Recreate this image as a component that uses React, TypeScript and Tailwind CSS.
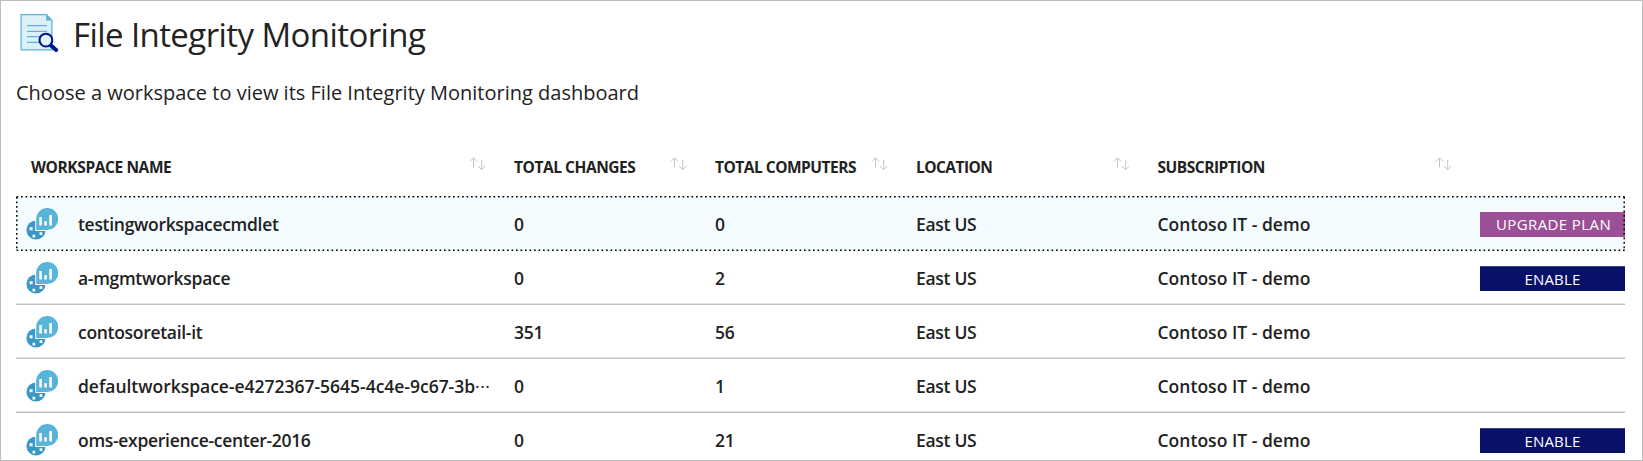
type Action = 'UPGRADE PLAN' | 'ENABLE';

interface Workspace {
  name: string;
  truncated?: boolean;
  changes: string;
  computers: string;
  location: string;
  subscription: string;
  action?: Action;
}

const workspaces: Workspace[] = [
  { name: 'testingworkspacecmdlet', changes: '0', computers: '0', location: 'East US', subscription: 'Contoso IT - demo', action: 'UPGRADE PLAN' },
  { name: 'a-mgmtworkspace', changes: '0', computers: '2', location: 'East US', subscription: 'Contoso IT - demo', action: 'ENABLE' },
  { name: 'contosoretail-it', changes: '351', computers: '56', location: 'East US', subscription: 'Contoso IT - demo' },
  { name: 'defaultworkspace-e4272367-5645-4c4e-9c67-3b', truncated: true, changes: '0', computers: '1', location: 'East US', subscription: 'Contoso IT - demo' },
  { name: 'oms-experience-center-2016', changes: '0', computers: '21', location: 'East US', subscription: 'Contoso IT - demo', action: 'ENABLE' },
];

const columns = 'grid grid-cols-[498px_201px_201px_241px_323px_145px]';

function MonitoringIcon() {
  return (
    <svg className="mt-px h-10 w-10 shrink-0" viewBox="0 0 40 40" fill="none">
      <path d="M2.1 2.6H27.5l5.4 5.6V37.9H2.1Z" fill="#ddeff7" stroke="#59b4d9" strokeWidth="1.2" />
      <path d="M27.1 2V8.6H33.5Z" fill="#59b4d9" />
      <path d="M8 13.7h20M8 19.3h20M8 24.6h13M8 30.3h12" stroke="#59b4d9" strokeWidth="1.3" />
      <path d="m31.5 33 5.6 5" stroke="#00188f" strokeWidth="4" strokeLinecap="round" />
      <circle cx="26.9" cy="28.1" r="6.4" fill="#e4f3f9" stroke="#00188f" strokeWidth="2.1" />
    </svg>
  );
}

function WorkspaceIcon() {
  return (
    <svg className="mb-px h-8 w-8 shrink-0" viewBox="0 0 32 32">
      <circle cx="10" cy="22" r="9.6" fill="#3999c6" />
      <path d="M3.6 19.3h3v3h-3zM13.6 24.3h2.7v2.7h-2.7zM6.5 26.8h2.7v2.7H6.5z" fill="#fff" />
      <path d="M9.2 23V10.8A11.5 11.5 0 0 1 20.7 -.5 11.5 11.5 0 0 1 32.5 11 11.7 11.7 0 0 1 20.7 23Z" fill="#fff" />
      <path d="M10.2 22V11A11 11 0 1 1 21 22Z" fill="#59b4d9" />
      <path d="M13.3 9h2.5v8.4h-2.5zM18.3 13.2h2.5v4.2h-2.5zM23.3 7h2.6v10.4h-2.6z" fill="#fff" />
    </svg>
  );
}

function SortIcon() {
  return (
    <svg className="mt-[6px] h-[14px] w-[17px] shrink-0" viewBox="0 0 17 14" fill="none" stroke="#c4c4c4" strokeWidth="1">
      <path d="M4.5 10.5V1M.8 4.5 4.5.8l3.7 3.7M12.7 3v9.5M9 9l3.7 3.7L16.4 9" />
    </svg>
  );
}

function HeaderCell({ label, spacing }: { label: string; spacing: string }) {
  return (
    <div className={`flex justify-between whitespace-nowrap text-[15.5px] font-bold leading-[30px] ${spacing}`}>
      <span className="pt-px">{label}</span>
      <SortIcon />
    </div>
  );
}

function ActionButton({ label }: { label: Action }) {
  const look =
    label === 'UPGRADE PLAN'
      ? 'bg-[#9b4f96] pl-[2px] leading-[25px] tracking-[0.4px]'
      : 'border-t border-[#3a4385] bg-[#081068] leading-[24px] tracking-[0.2px]';
  return (
    <button className={`h-[25px] w-[145px] whitespace-nowrap text-center text-[15px] font-medium text-white ${look}`}>
      {label}
    </button>
  );
}

function Row({ item, selected }: { item: Workspace; selected: boolean }) {
  return (
    <div className="relative">
      <div
        className={`${columns} h-[54px] items-center border-b pt-[2px] text-[17.5px] font-semibold leading-[24px] ${
          selected ? 'border-transparent bg-[#f4fcff]' : 'border-[#bfbfbf] shadow-[inset_0_-1px_0_#e2e2e2]'
        }`}
      >
        <div className="flex items-center whitespace-nowrap pl-[10px]">
          <WorkspaceIcon />
          <span className={`ml-5 pb-[2px] ${item.truncated ? 'tracking-[-0.02px]' : 'tracking-[-0.3px]'}`}>
            {item.name}
            {item.truncated && <span className="font-normal tracking-[0.5px]">···</span>}
          </span>
        </div>
        <span className="pb-[2px] tracking-[-0.3px]">{item.changes}</span>
        <span className="pb-[2px] tracking-[-0.3px]">{item.computers}</span>
        <span className="pb-[2px] tracking-[-0.3px]">{item.location}</span>
        <span className="pb-[2px] pl-[0.5px] tracking-[0.02px]">{item.subscription}</span>
        {item.action ? <ActionButton label={item.action} /> : <span />}
      </div>
      {selected && (
        <svg className="pointer-events-none absolute -top-px left-0 h-[55px] w-full" fill="none" stroke="#000" strokeWidth="1.5">
          <path d="M.5 .8H1609M.5 54.2H1609M.8 1V54M1608.2 1V54" strokeDasharray="1.7 2.8" />
        </svg>
      )}
    </div>
  );
}

export default function App() {
  return (
    <main className="h-[461px] w-[1643px] overflow-hidden border border-[#bcbcbc] bg-white pl-[15px] font-['Open_Sans','Noto_Sans',sans-serif] text-[#222]">
      <header className="flex h-[68px] items-start pl-[3px] pt-[10px]">
        <MonitoringIcon />
        <h1 className="ml-[14px] whitespace-nowrap text-[33px] leading-[48px] tracking-[-0.58px]">File Integrity Monitoring</h1>
      </header>
      <p className="h-[82px] whitespace-nowrap pt-[8px] text-[20px] leading-[32px]">
        Choose a workspace to view its File Integrity Monitoring dashboard
      </p>
      <section className="w-[1609px]">
        <div className={`${columns} h-[46px]`}>
          <HeaderCell label="WORKSPACE NAME" spacing="pl-[15px] pr-[28px] tracking-[-0.4px]" />
          <HeaderCell label="TOTAL CHANGES" spacing="pr-[28px] tracking-[-0.45px]" />
          <HeaderCell label="TOTAL COMPUTERS" spacing="pr-[28px] tracking-[-0.5px]" />
          <HeaderCell label="LOCATION" spacing="pr-[27px] tracking-[-0.55px]" />
          <HeaderCell label="SUBSCRIPTION" spacing="pl-[0.5px] pr-[28px] tracking-[-0.48px]" />
        </div>
        {workspaces.map((item, index) => (
          <Row key={item.name} item={item} selected={index === 0} />
        ))}
      </section>
    </main>
  );
}
